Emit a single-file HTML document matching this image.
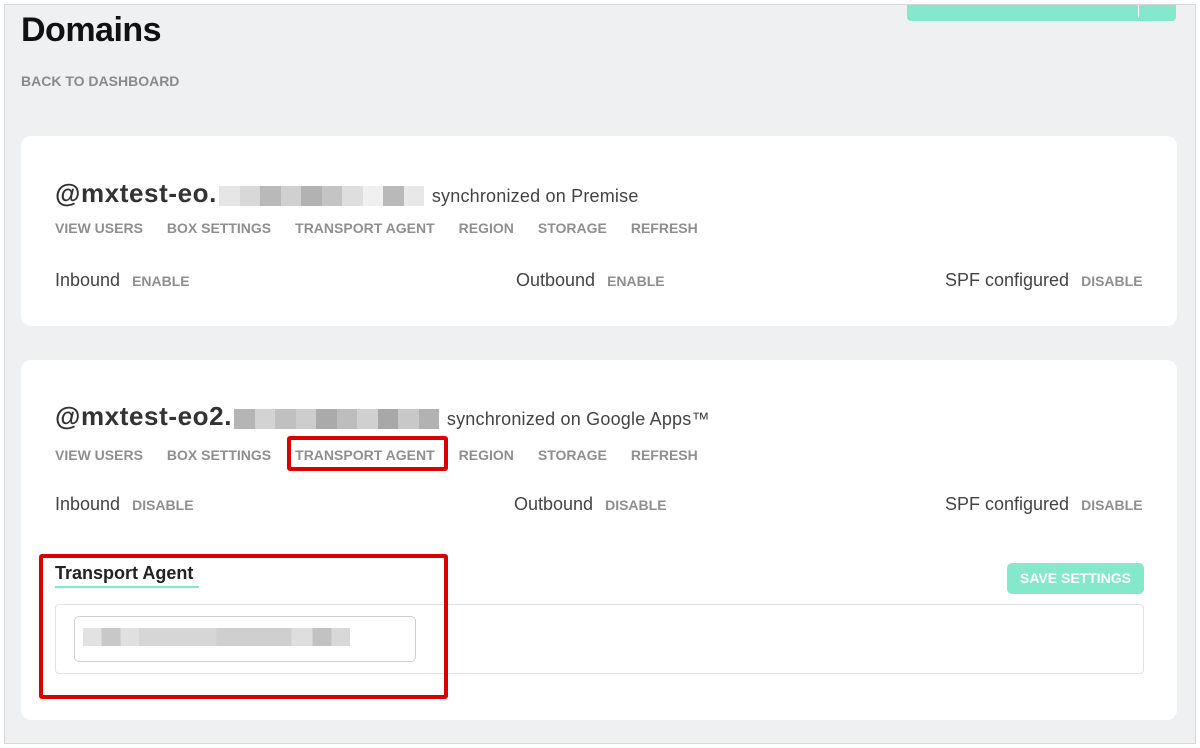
<!DOCTYPE html>
<html><head><meta charset="utf-8"><style>
*{margin:0;padding:0;box-sizing:border-box}
body{width:1200px;height:748px;background:#fff;font-family:"Liberation Sans",sans-serif;position:relative;overflow:hidden}
.frame{position:absolute;left:4px;top:4px;width:1192px;height:740px;background:#eff0f2;border:1px solid #d8d8d8;overflow:hidden}
.abs{position:absolute}
h1{position:absolute;left:16px;top:6px;font-size:34px;font-weight:bold;color:#111;letter-spacing:-0.5px}
.back{left:16px;top:68px;font-size:14px;color:#8a8a8a;font-weight:bold}
.topbtn{left:902px;top:-6px;width:269px;height:22px;background:#84e8cb;border-radius:4px}
.card{position:absolute;left:16px;width:1156px;background:#fff;border-radius:10px}
.dom{position:absolute;left:34px;font-size:26px;font-weight:bold;color:#333;white-space:nowrap;letter-spacing:0.6px}
.sync{font-size:18px;font-weight:normal;color:#444;letter-spacing:0.2px}
.blocks{display:inline-block;vertical-align:middle;height:20px;position:relative;top:-3px;margin-left:2px}
.blocks i{display:inline-block;width:20.5px;height:20px}
.links{position:absolute;left:34px;font-size:14px;font-weight:bold;color:#8f8f8f;white-space:nowrap}
.links span{margin-right:24px}
.row{position:absolute;font-size:18px;color:#444;white-space:nowrap}
.row b{font-size:14px;color:#8f8f8f;margin-left:12px}
.red{position:absolute;border:4px solid #d80000;border-radius:3px}
</style></head><body><div class="frame">
<div class="abs topbtn"></div>
<div class="abs" style="left:1133px;top:0;width:1px;height:12px;background:#fff"></div>
<h1>Domains</h1>
<div class="abs back">BACK TO DASHBOARD</div>

<div class="card" style="top:131px;height:190px">
  <div class="dom" style="top:42px">@mxtest-eo.<span class="blocks"><i style="background:#e6e6e6"></i><i style="background:#d8d8d8"></i><i style="background:#b9b9b9"></i><i style="background:#d0d0d0"></i><i style="background:#b2b2b2"></i><i style="background:#c4c4c4"></i><i style="background:#dedede"></i><i style="background:#f0f0f0"></i><i style="background:#b9b9b9"></i><i style="background:#e8e8e8"></i></span> <span class="sync">synchronized on Premise</span></div>
  <div class="links" style="top:84px"><span>VIEW USERS</span><span>BOX SETTINGS</span><span>TRANSPORT AGENT</span><span>REGION</span><span>STORAGE</span><span>REFRESH</span></div>
  <div class="row" style="left:34px;top:134px">Inbound<b>ENABLE</b></div>
  <div class="row" style="left:495px;top:134px">Outbound<b>ENABLE</b></div>
  <div class="row" style="left:924px;top:134px">SPF configured<b>DISABLE</b></div>
</div>

<div class="card" style="top:355px;height:360px">
  <div class="dom" style="top:41px">@mxtest-eo2.<span class="blocks"><i style="background:#b5b5b5"></i><i style="background:#d3d3d3"></i><i style="background:#c0c0c0"></i><i style="background:#cdcdcd"></i><i style="background:#aaa"></i><i style="background:#bdbdbd"></i><i style="background:#d0d0d0"></i><i style="background:#a8a8a8"></i><i style="background:#c8c8c8"></i><i style="background:#b2b2b2"></i></span> <span class="sync">synchronized on Google Apps™</span></div>
  <div class="links" style="top:87px"><span>VIEW USERS</span><span>BOX SETTINGS</span><span>TRANSPORT AGENT</span><span>REGION</span><span>STORAGE</span><span>REFRESH</span></div>
  <div class="row" style="left:34px;top:134px">Inbound<b>DISABLE</b></div>
  <div class="row" style="left:493px;top:134px">Outbound<b>DISABLE</b></div>
  <div class="row" style="left:924px;top:134px">SPF configured<b>DISABLE</b></div>
  <div class="abs" style="left:34px;top:203px;font-size:18px;font-weight:bold;color:#222">Transport Agent</div>
  <div class="abs" style="left:34px;top:226px;width:144px;height:2px;background:#84e8cb"></div>
  <div class="abs" style="left:986px;top:203px;width:137px;height:31px;background:#84e8cb;border-radius:5px;color:#fff;font-size:14px;font-weight:bold;text-align:center;line-height:31px">SAVE SETTINGS</div>
  <div class="abs" style="left:34px;top:244px;width:1089px;height:70px;border:1px solid #e2e2e2;border-radius:4px"></div>
  <div class="abs" style="left:53px;top:256px;width:342px;height:46px;border:1px solid #cfcfcf;border-radius:5px"></div>
  <div class="abs" style="left:62px;top:268px;width:267px;height:18px;background:linear-gradient(90deg,#e2e2e2 0 7%,#c8c8c8 7% 14%,#e0e0e0 14% 21%,#d6d6d6 21% 50%,#cfcfcf 50% 78%,#dedede 78% 86%,#c2c2c2 86% 93%,#d8d8d8 93%)"></div>
</div>

<div class="red" style="left:282px;top:431px;width:161px;height:35px"></div>
<div class="red" style="left:34px;top:549px;width:409px;height:145px"></div>
</div></body></html>
